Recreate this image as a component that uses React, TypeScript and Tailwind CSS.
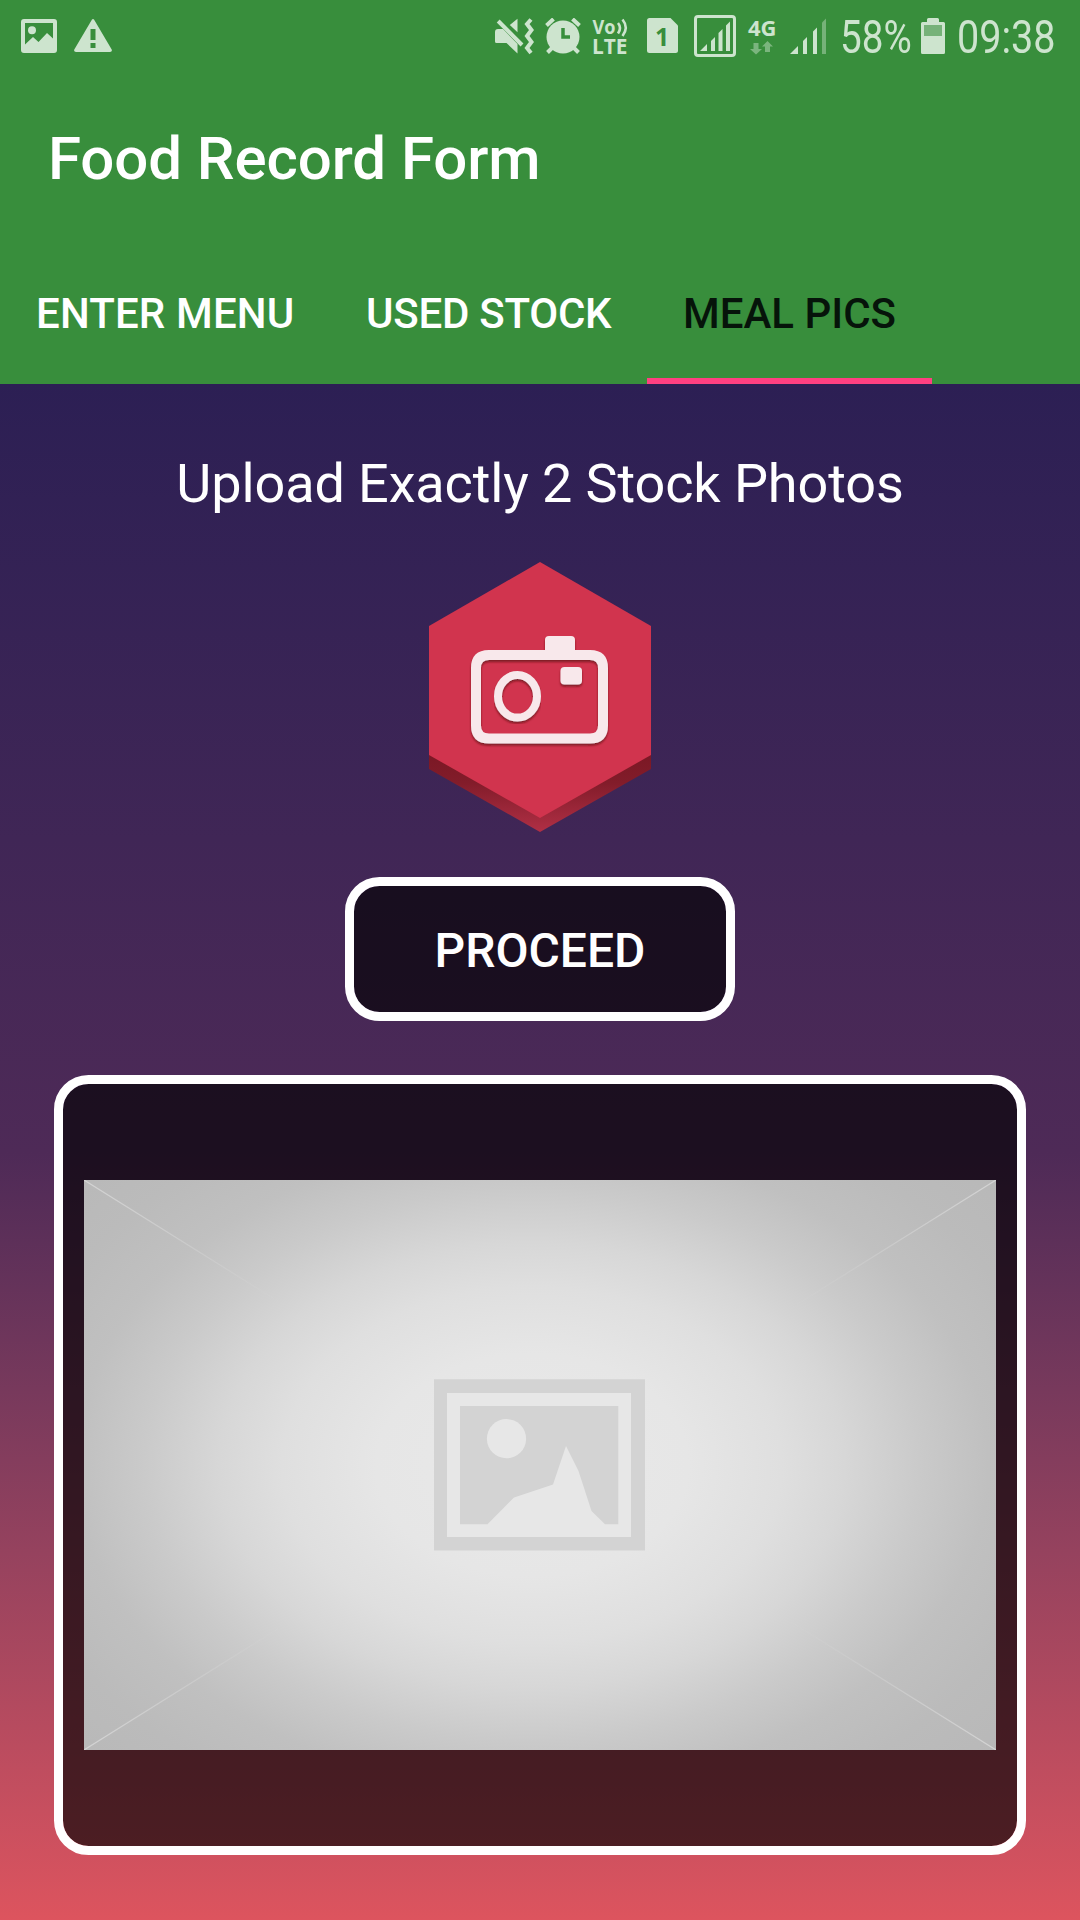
import React from "react";

const INK = "#cde4ce";

function PictureIcon() {
  return (
    <svg width="36" height="34" viewBox="0 0 36 34" className="shrink-0">
      <path fill={INK} fillRule="evenodd" d="M3 0h30a3 3 0 0 1 3 3v28a3 3 0 0 1-3 3H3a3 3 0 0 1-3-3V3a3 3 0 0 1 3-3ZM4 4v21.500l8-7.500 5.500 5L26 14l6 5.500V4Z" />
      <circle cx="11" cy="11.300" r="4" fill={INK} />
    </svg>
  );
}

function WarningIcon() {
  return (
    <svg width="38" height="33" viewBox="0 0 38 33" className="shrink-0">
      <path fill={INK} fillRule="evenodd" d="M18 .6Q19-.6 20 .6L37.700 30.500Q38.500 33 36 33H2Q-.5 33 .3 30.500ZM16.500 10v11h5V10ZM16.500 24v5h5v-5Z" />
    </svg>
  );
}

function MuteVibrateIcon() {
  return (
    <svg width="39" height="37" viewBox="0 0 39 37" className="shrink-0">
      <path fill={INK} d="M3 11H8L22.500 26v9.500L11.500 25H1.500Q0 25 0 23.500v-9.500Q0 11 3 11ZM14.800 7 22.500.8v13.400Z" />
      <path d="M3.200 3 27 27" stroke={INK} strokeWidth="4" />
      <path d="M36 1.500 32 6l4.500 6-4.500 6 4.500 6-4.500 6 4 5" fill="none" stroke={INK} strokeWidth="4" />
    </svg>
  );
}

function AlarmIcon() {
  return (
    <svg width="36" height="36" viewBox="0 0 36 36" className="shrink-0">
      <circle cx="18" cy="19" r="16.500" fill={INK} />
      <path d="M1.500 7.500 8.500 1M27.500 1l7 6.500" stroke={INK} strokeWidth="4" />
      <path d="m7 30-4.500 4.500M29 30l4.500 4.500" stroke={INK} strokeWidth="4" />
      <path d="M18 10v9h7" stroke="#388e3c" strokeWidth="3.500" fill="none" />
    </svg>
  );
}

function VolteIcon() {
  return (
    <svg width="36" height="36" viewBox="0 0 36 36" className="shrink-0 overflow-visible">
      <g fill={INK} fontFamily="Open Sans" fontWeight="700">
        <text x="-.5" y="15" fontSize="19" textLength="23" lengthAdjust="spacingAndGlyphs">Vo</text>
        <text x="-1" y="35" fontSize="20.500" textLength="35.500" lengthAdjust="spacingAndGlyphs">LTE</text>
      </g>
      <path d="M25 4q4 5 0 10.500M29.500.5q6.500 8 0 16.500" stroke={INK} strokeWidth="2.600" fill="none" />
    </svg>
  );
}

function SimIcon() {
  return (
    <svg width="31" height="35" viewBox="0 0 31 35" className="shrink-0">
      <path fill={INK} d="M2.500 0H23.500L31 7.500v25Q31 35 28.500 35h-26Q0 35 0 32.500V2.500Q0 0 2.500 0Z" />
      <text x="8" y="27.500" fontSize="25" fontWeight="700" fontFamily="Open Sans" fill="#388e3c">1</text>
    </svg>
  );
}

function BoxedSignalIcon() {
  return (
    <svg width="42" height="42" viewBox="0 0 42 42" className="shrink-0">
      <rect x="1.500" y="1.500" width="39" height="39" rx="2.500" fill="none" stroke={INK} strokeWidth="3" />
      <path fill={INK} d="m6 36 7-7v7ZM17 26l4-4v14h-4ZM24.500 18l4-4v22h-4ZM32 10.500l4-4V36h-4Z" />
    </svg>
  );
}

function NetworkIcon() {
  return (
    <svg width="29" height="36" viewBox="0 0 29 36" className="shrink-0 overflow-visible">
      <text x="0" y="18" fontSize="21.500" fontWeight="700" fontFamily="Open Sans" fill={INK} textLength="28.500" lengthAdjust="spacingAndGlyphs">4G</text>
      <path fill="#7bb57e" d="M5.500 25h5v6H14l-6 5.500L2 31h3.500ZM17 34v-5.500h-3l5.500-5.500 5.500 5.500h-3V34Z" />
    </svg>
  );
}

function SignalIcon() {
  return (
    <svg width="37" height="36" viewBox="0 0 37 36" className="shrink-0">
      <path fill={INK} d="m0 36 8-8v8ZM13 23l4-4v17h-4ZM23 13.500l4-4V36h-4Z" />
      <path fill="#76b279" d="m32 4.500 4-4V36h-4Z" />
    </svg>
  );
}

function BatteryIcon() {
  return (
    <svg width="24" height="36" viewBox="0 0 24 36" className="shrink-0">
      <path fill={INK} d="M7.500 0h9q1.500 0 1.500 1.500V4h4.500Q24 4 24 5.500v29q0 1.500-1.500 1.500h-21Q0 36 0 34.500v-29Q0 4 1.500 4H6V1.500Q6 0 7.500 0Z" />
      <path fill="#76b279" d="M3 7h18v11H3Z" />
    </svg>
  );
}

function StatusBar() {
  return (
    <div className="flex h-[72px] items-start text-[#cde4ce]">
      <div className="ml-[21px] mt-[19px] flex gap-[17px]">
        <PictureIcon />
        <WarningIcon />
      </div>
      <div className="ml-[383px] mt-[18px] flex items-start">
        <MuteVibrateIcon />
        <div className="ml-[11px]"><AlarmIcon /></div>
        <div className="ml-[12px] mt-px"><VolteIcon /></div>
        <div className="ml-[18px]"><SimIcon /></div>
        <div className="-mt-[3px] ml-[16px]"><BoxedSignalIcon /></div>
        <div className="ml-[12px]"><NetworkIcon /></div>
        <div className="ml-[13px]"><SignalIcon /></div>
        <div className="-mt-[8px] ml-[13px] w-[81px] text-[46px] leading-[54px]">
          <span className="inline-block origin-left scale-x-[0.84]">58%</span>
        </div>
        <BatteryIcon />
        <div className="-mt-[8px] ml-[12px] w-[100px] text-[46px] leading-[54px]">
          <span className="inline-block origin-left scale-x-[0.86]">09:38</span>
        </div>
      </div>
    </div>
  );
}

function Tab({ label, className, active = false }: { label: string; className: string; active?: boolean }) {
  return (
    <div className={`flex flex-col whitespace-nowrap ${className} ${active ? "text-[#06140a]" : "text-white"}`}>
      <div className="flex flex-1 items-center pl-9 pt-[9px] text-[42px] font-medium leading-[50px]">{label}</div>
      <div className={`h-1.5 ${active ? "bg-[#ff4081]" : ""}`} />
    </div>
  );
}

function CameraBadge() {
  return (
    <svg width="222" height="271" viewBox="429 562 222 271">
      <defs>
        <linearGradient id="rim" gradientUnits="userSpaceOnUse" x1="0" y1="756" x2="0" y2="832">
          <stop offset="0" stopColor="#7b1825" />
          <stop offset=".35" stopColor="#821c2a" />
          <stop offset="1" stopColor="#b02f45" />
        </linearGradient>
        <filter id="drop" x="-10%" y="-10%" width="120%" height="125%">
          <feDropShadow dx="0" dy="2" stdDeviation="1.200" floodColor="#5a0a18" floodOpacity=".7" />
        </filter>
      </defs>
      <path fill="url(#rim)" d="M429 750 540 812l111-62v19l-111 63-111-63Z" />
      <path fill="#d1344e" d="m540 562 111 64v129l-111 63-111-63V626Z" />
      <g fill="#f8e8eb" filter="url(#drop)">
        <path fillRule="evenodd" d="M489 650h56v-10q0-4 4-4h22q4 0 4 4v10h15q18 0 18 18v57.500q0 18-18 18H489q-18 0-18-18V668q0-18 18-18Zm0 10q-8 0-8 8v57.500q0 8 8 8h101q8 0 8-8V668q0-8-8-8Z" />
        <rect x="560.500" y="667" width="21.500" height="17.500" rx="4" />
      </g>
      <ellipse cx="517.500" cy="696.300" rx="19.500" ry="21.300" fill="none" stroke="#f8e8eb" strokeWidth="8" filter="url(#drop)" />
    </svg>
  );
}

function PhotoPlaceholder() {
  return (
    <svg width="912" height="570" viewBox="84 1180 912 570" className="block">
      <defs>
        <radialGradient id="glow" gradientUnits="userSpaceOnUse" cx="0" cy="0" r="1" gradientTransform="translate(532 1465) scale(625 445)">
          <stop offset="0" stopColor="#e9e9e9" />
          <stop offset=".25" stopColor="#e6e6e6" />
          <stop offset=".4" stopColor="#dfdfdf" />
          <stop offset=".5" stopColor="#d7d7d7" />
          <stop offset=".62" stopColor="#cacaca" />
          <stop offset=".73" stopColor="#c0c0c0" />
          <stop offset=".85" stopColor="#bbbbbb" />
          <stop offset="1" stopColor="#b8b8b8" />
        </radialGradient>
        <radialGradient id="crease" gradientUnits="userSpaceOnUse" cx="540" cy="1465" r="538">
          <stop offset=".5" stopColor="#d4d4d4" stopOpacity="0" />
          <stop offset="1" stopColor="#d4d4d4" />
        </radialGradient>
      </defs>
      <path fill="url(#glow)" d="M84 1180h912v570H84Z" />
      <path d="m84 1180 912 570M996 1180 84 1750" stroke="url(#crease)" strokeWidth="1.200" />
      <path fill="#e7e7e7" d="M447 1392h184v145H447Z" />
      <path fill="#d3d3d3" fillRule="evenodd" d="M434 1379.300h211v171.200H434ZM447 1393v144h184v-144Z" />
      <path fill="#d3d3d3" d="M460 1406h158.300v118.200H605l-13.500-13.200-13-40-12.500-25-13 38.500-39 13-26.500 26.700H460Z" />
      <circle cx="506.500" cy="1438.700" r="19.600" fill="#e7e7e7" />
    </svg>
  );
}

export default function App() {
  return (
    <div className="flex h-[1920px] w-[1080px] flex-col overflow-hidden font-['Roboto',sans-serif]">
      <header className="flex h-[384px] flex-col bg-[#388e3c]">
        <StatusBar />
        <div className="flex h-[168px] items-center pl-12 pt-[5px]">
          <h1 className="text-[60px] font-medium leading-[70px] tracking-[-0.08px] text-white">Food Record Form</h1>
        </div>
        <nav className="flex flex-1">
          <Tab label="ENTER MENU" className="w-[330px] tracking-[0.15px]" />
          <Tab label="USED STOCK" className="w-[317px] tracking-[-0.25px]" />
          <Tab label="MEAL PICS" className="w-[285px]" active />
        </nav>
      </header>
      <main className="flex flex-1 flex-col items-center bg-linear-to-b from-[#2c1f54] via-[#4e2a57] to-[#dd545e]">
        <p className="mt-[68px] text-[54px] leading-[64px] tracking-[-0.11px] text-white">Upload Exactly 2 Stock Photos</p>
        <div className="mt-[46px]"><CameraBadge /></div>
        <button className="mt-[44px] flex h-[144px] w-[390px] items-center justify-center rounded-[34.5px] border-[9px] border-white bg-black/63 bg-clip-padding pt-[3px] text-[48px] font-medium text-white">
          PROCEED
        </button>
        <div className="mt-[54px] flex h-[780px] w-[972px] items-center justify-center rounded-[34.5px] border-[9px] border-white bg-black/63 bg-clip-padding">
          <PhotoPlaceholder />
        </div>
      </main>
    </div>
  );
}
